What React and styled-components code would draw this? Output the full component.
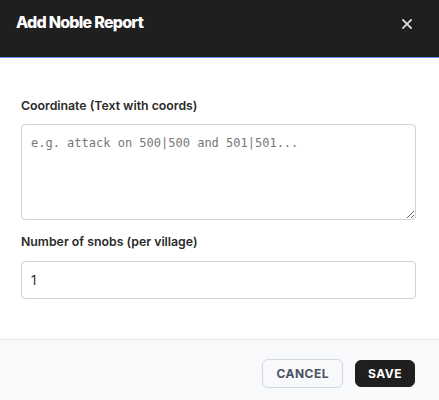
import React from "react";
import styled, { createGlobalStyle } from "styled-components";

const Global = createGlobalStyle`
  html, body { margin: 0; padding: 0; background: #ffffff; }
  body { font-family: Inter, "Liberation Sans", sans-serif; }
  * { box-sizing: border-box; }
`;

const Modal = styled.div`
  width: 439px;
  height: 400px;
  display: flex;
  flex-direction: column;
  overflow: hidden;
  background: #fff;
`;

const Header = styled.div`
  height: 58px;
  flex: none;
  background: #1f1f1f;
  border-bottom: 1px solid #5a8ef0;
  display: flex;
  align-items: flex-start;
  justify-content: space-between;
  padding: 12px 27px 0 16px;
`;

const Title = styled.h2`
  margin: 0;
  font-family: Inter, "Noto Sans", sans-serif;
  font-weight: 800;
  font-size: 16px;
  line-height: 20px;
  color: #ffffff;
  letter-spacing: -0.75px;
`;

const Close = styled.button`
  border: none;
  background: transparent;
  color: #d8d8d8;
  padding: 0;
  margin-top: 6px;
  width: 10px;
  height: 12px;
  display: flex;
  align-items: center;
  justify-content: center;
  cursor: pointer;
`;

const Body = styled.div`
  flex: 1;
  padding: 39px 23px 0 21px;
  display: flex;
  flex-direction: column;
  gap: 13px;
`;

const Field = styled.div`
  display: flex;
  flex-direction: column;
  gap: ${(p) => p.$gap || 9}px;
`;

const Label = styled.label`
  font-family: Inter, "Liberation Sans", sans-serif;
  font-weight: 600;
  font-size: 12.3px;
  line-height: 18px;
  color: #2b2b2b;
`;

const TextArea = styled.textarea`
  width: 395px;
  height: 96px;
  border: 1px solid #cfd3d9;
  border-radius: 4px;
  padding: 10px 9px;
  font-family: "DejaVu Sans Mono", "Liberation Mono", monospace;
  font-size: 12px;
  line-height: 16px;
  color: #333;
  resize: vertical;
  outline: none;
  &::placeholder { color: #777; }
`;

const Input = styled.input`
  width: 395px;
  height: 38px;
  border: 1px solid #cfd3d9;
  border-radius: 4px;
  padding: 0 9px;
  font-family: Inter, "Liberation Sans", sans-serif;
  font-size: 13px;
  color: #333;
  outline: none;
`;

const Footer = styled.div`
  height: 61px;
  flex: none;
  background: #f8f9fb;
  border-top: 1px solid #e3e6ea;
  display: flex;
  align-items: center;
  justify-content: flex-end;
  gap: 12px;
  padding: 6px 24px 0 0;
`;

const Button = styled.button`
  height: ${(p) => (p.$primary ? "27px" : "29px")};
  padding: 0 ${(p) => (p.$primary ? "12px" : "13px")};
  border-radius: 6px;
  border: 1px solid ${(p) => (p.$primary ? "#1f1f1f" : "#d3d7dd")};
  background: ${(p) => (p.$primary ? "#1f1f1f" : "#f8f9fb")};
  color: ${(p) => (p.$primary ? "#ffffff" : "#4a5260")};
  font-family: Inter, "Liberation Sans", sans-serif;
  font-weight: 700;
  font-size: 12px;
  letter-spacing: 0.5px;
  cursor: pointer;
`;

export default function App() {
  return (
    <>
      <Global />
      <Modal>
        <Header>
          <Title>Add Noble Report</Title>
          <Close aria-label="close">
            <svg width="10" height="10" viewBox="0 0 10 10">
              <path d="M1 1L9 9M9 1L1 9" stroke="currentColor" strokeWidth="1.8" strokeLinecap="square" />
            </svg>
          </Close>
        </Header>
        <Body>
          <Field>
            <Label>Coordinate (Text with coords)</Label>
            <TextArea placeholder="e.g. attack on 500|500 and 501|501..." />
          </Field>
          <Field $gap={10}>
            <Label>Number of snobs (per village)</Label>
            <Input defaultValue="1" />
          </Field>
        </Body>
        <Footer>
          <Button>CANCEL</Button>
          <Button $primary>SAVE</Button>
        </Footer>
      </Modal>
    </>
  );
}
